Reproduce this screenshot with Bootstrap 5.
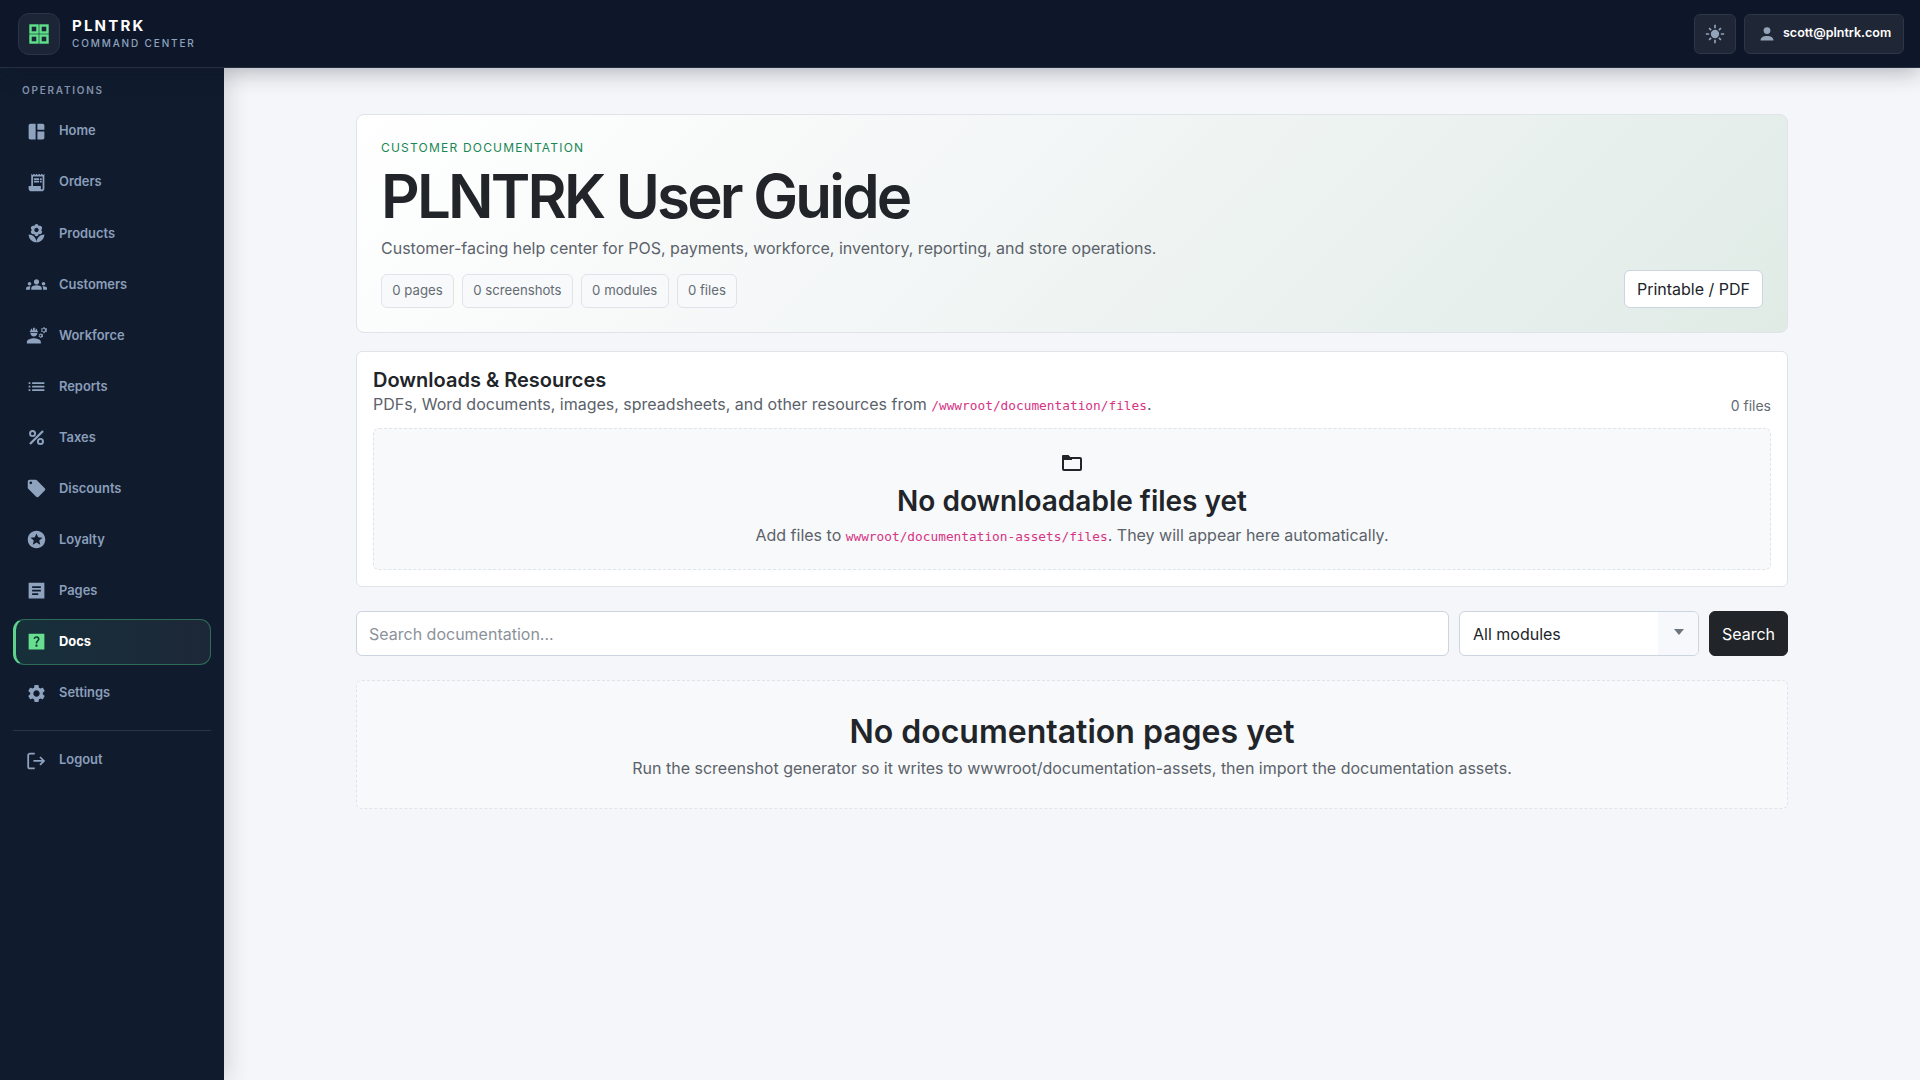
<!DOCTYPE html>
<html lang="en">

<head>
    <meta charset="UTF-8">
    <meta name="viewport" content="width=device-width, initial-scale=1.0">
    <title>PLNTRK User Guide</title>
    <link href="https://cdn.jsdelivr.net/npm/bootstrap@5.3.3/dist/css/bootstrap.min.css" rel="stylesheet">
    <style>
        html, body { height: 100%; }
        body { font-family: Inter, "Liberation Sans", sans-serif; background: #f5f6f9; color: #212529; overflow: hidden; }
        .app-top { height: 68px; background: #0d1729; border-bottom: 1px solid #27303f; padding: 0 16px 0 18px; position: relative; z-index: 3; box-shadow: 0 4px 22px rgba(15, 23, 42, .3); }
        .brand-tile { width: 42px; height: 42px; border-radius: 11px; background: #1c2536; border: 1px solid #2b3446; }
        .brand-tile svg { width: 24px; height: 24px; }
        .brand-name { font-size: 15px; font-weight: 700; letter-spacing: 2.2px; color: #fff; line-height: 16px; margin-bottom: 3px; }
        .brand-sub { font-size: 10px; font-weight: 500; letter-spacing: 1.85px; color: #8fa3bf; line-height: 12px; }
        .brand-gap { gap: 12px; }
        .top-btn { height: 40px; background: #1f2636; border: 1px solid #2d3546; border-radius: 6px; color: #fff; }
        .top-btn svg { fill: #94a3b8; }
        .theme-btn { width: 42px; }
        .user-btn { width: 160px; font-size: 12.5px; font-weight: 600; padding-left: 14px; gap: 8px; }
        .app-shell { height: calc(100vh - 68px); }
        .side-nav { width: 224px; background: #101b2d; padding: 16px 13px 0; position: relative; z-index: 2; box-shadow: 3px 0 22px rgba(15, 23, 42, .16); }
        .side-label { font-size: 10px; font-weight: 600; letter-spacing: 1.76px; color: #8293ab; margin: 0 0 12px 9px; line-height: 12px; }
        .side-link { height: 46px; margin-bottom: 5.1px; padding-left: 11.5px; gap: 12.5px; color: #8a9eba; font-size: 12.9px; font-weight: 600; text-decoration: none; border: 1px solid transparent; border-radius: 11px; }
        .side-link svg { width: 21px; height: 21px; fill: #8fa3bf; flex: none; }
        .side-link svg.stroke-icon { fill: none; stroke: #8fa3bf; stroke-width: 2; }
        .side-link.is-active { color: #fff; font-weight: 700; border-color: #2d6a58; border-left: 3px solid #5fd38d; padding-left: 9.5px; background: linear-gradient(90deg, #16303a, #1d2738); }
        .side-link.is-active svg { fill: #66e08f; }
        .side-rule { border-top: 1px solid #2a3343; margin: 14px 0 6px; }
        .main-pane { overflow: hidden; }
        .main-wrap { width: 1432px; margin: 46px auto 0; }
        .hero-box { height: 219px; border: 1px solid #dfe3ea; border-radius: 8px; padding: 24px; background: linear-gradient(135deg, #fff 0%, #f4f7f7 40%, #e0ebe6 100%); margin-bottom: 18px; }
        .hero-kicker { font-size: 12px; letter-spacing: 1.2px; color: #198754; line-height: 18px; margin: 1px 0 3px; }
        .hero-title { font-size: 60px; font-weight: 600; letter-spacing: -2.8px; line-height: 72px; margin: 0 0 4px; }
        .hero-lead { font-size: 16px; color: #5b626a; line-height: 24px; margin-bottom: 14px; }
        .stat-chip { height: 34px; padding: 0 10.3px; border: 1px solid #dfe3ea; border-radius: 6px; background: #f8f9fa; color: #646b73; font-size: 13.2px; }
        .pdf-btn { height: 38px; padding: 0 12px; font-size: 16px; background: #fff; border: 1px solid #ccd4e0; color: #212529; }
        .files-box { height: 236px; border: 1px solid #dfe3ea; border-radius: 6px; background: #fff; padding: 16px; margin-bottom: 24px; }
        .files-title { font-size: 20px; font-weight: 600; line-height: 24px; margin: 0; }
        .files-sub { font-size: 16px; color: #5b626a; line-height: 24px; height: 24px; }
        .files-sub code, .empty-sub code { font-family: "DejaVu Sans Mono", monospace; font-size: 12.8px; line-height: 1; color: #d63384; }
        .files-count { font-size: 14px; line-height: 21px; color: #646b73; }
        .empty-box { border: 1px dashed #dfe3ea; border-radius: 6px; background: #f8f9fa; text-align: center; }
        .empty-files { height: 142px; margin-top: 12px; padding-top: 26px; }
        .empty-files svg { display: block; margin: 0 auto 13px; }
        .empty-title { font-size: 28px; font-weight: 600; line-height: 34px; margin: 0 0 5px; }
        .empty-sub { font-size: 16px; color: #5b626a; line-height: 24px; }
        .search-row { gap: 10px; margin-bottom: 24px; }
        .search-input { height: 45px; font-size: 16px; border-color: #ccd4e0; }
        .search-input::placeholder { color: #8b9299; }
        .module-pick { width: 240px; height: 45px; flex: none; font-size: 16px; border: 1px solid #ccd4e0; border-radius: 6px; background: #fff; overflow: hidden; }
        .module-pick span { padding-left: 13px; color: #212529; }
        .module-caret { width: 40px; height: 100%; background: #f6f8fb; position: relative; }
        .module-caret::after { content: ""; position: absolute; left: 16px; top: 17px; border: 5px solid transparent; border-top: 6px solid #6c757d; }
        .search-btn { height: 45px; width: 79px; font-size: 16px; padding: 0; flex: none; }
        .empty-pages { height: 129px; padding-top: 32px; }
        .empty-pages .empty-title { font-size: 32px; line-height: 38px; margin-bottom: 5px; }
    </style>
</head>

<body>
    <header class="app-top d-flex align-items-center justify-content-between">
        <div class="d-flex align-items-center brand-gap">
            <div class="brand-tile d-flex align-items-center justify-content-center">
                <svg viewBox="0 0 24 24" fill="none" stroke="#5ee08a" stroke-width="2.4">
                    <rect x="3.5" y="3.5" width="7" height="7" /><rect x="13.5" y="3.5" width="7" height="7" />
                    <rect x="3.5" y="13.5" width="7" height="7" /><rect x="13.5" y="13.5" width="7" height="7" />
                </svg>
            </div>
            <div>
                <div class="brand-name">PLNTRK</div>
                <div class="brand-sub">COMMAND CENTER</div>
            </div>
        </div>
        <div class="d-flex gap-2">
            <button class="top-btn theme-btn d-flex align-items-center justify-content-center p-0" type="button" aria-label="Theme">
                <svg width="20" height="20" viewBox="0 0 24 24"><circle cx="12" cy="12" r="5" /><path d="M11 1h2v4h-2zM11 19h2v4h-2zM1 11h4v2H1zM19 11h4v2h-4zM4.2 5.6l1.4-1.4 2.5 2.5-1.4 1.4zM15.9 17.3l1.4-1.4 2.5 2.5-1.4 1.4zM4.2 18.4l2.5-2.5 1.4 1.4-2.5 2.5zM15.9 6.7l2.5-2.500 1.4 1.4-2.5 2.5z" /></svg>
            </button>
            <button class="top-btn user-btn d-flex align-items-center" type="button">
                <svg width="16" height="16" viewBox="0 0 16 16"><circle cx="8" cy="4.6" r="3.4" /><path d="M1.5 14.5c0-3.2 3-4.6 6.5-4.6s6.5 1.4 6.5 4.6z" /></svg>
                scott@plntrk.com
            </button>
        </div>
    </header>

    <div class="app-shell d-flex">
        <nav class="side-nav flex-shrink-0">
            <div class="side-label">OPERATIONS</div>
            <a class="side-link d-flex align-items-center" href="#"><svg viewBox="0 0 24 24"><path d="M11 21H5c-1.1 0-2-.9-2-2V5c0-1.1.9-2 2-2h6v18zm2 0h6c1.1 0 2-.9 2-2v-7h-8v9zm8-11V5c0-1.1-.9-2-2-2h-6v7h8z" /></svg>Home</a>
            <a class="side-link d-flex align-items-center" href="#"><svg viewBox="0 0 24 24"><path d="M19.5 3.5L18 2l-1.5 1.5L15 2l-1.5 1.5L12 2l-1.5 1.5L9 2 7.5 3.5 6 2v14H3v3c0 1.66 1.34 3 3 3h12c1.66 0 3-1.34 3-3V2l-1.5 1.5zM19 19c0 .55-.45 1-1 1s-1-.45-1-1v-3H8V5h11v14zM9 7h6v2H9zm7 0h2v2h-2zM9 10h6v2H9zm7 0h2v2h-2z" /></svg>Orders</a>
            <a class="side-link d-flex align-items-center" href="#"><svg viewBox="0 0 24 24"><path d="M12 22c4.97 0 9-4.03 9-9-4.97 0-9 4.03-9 9zM5.6 10.25c0 1.38 1.12 2.5 2.5 2.5.53 0 1.01-.16 1.42-.44l-.02.19c0 1.38 1.12 2.5 2.5 2.5s2.5-1.12 2.5-2.5l-.02-.19c.4.28.89.44 1.42.44 1.38 0 2.5-1.12 2.5-2.5 0-1-.59-1.85-1.43-2.25.84-.4 1.43-1.25 1.43-2.25 0-1.38-1.12-2.5-2.5-2.5-.53 0-1.01.16-1.42.44l.02-.19C14.5 2.12 13.38 1 12 1S9.5 2.12 9.5 3.5l.02.19c-.4-.28-.89-.44-1.42-.44-1.38 0-2.5 1.12-2.5 2.5 0 1 .59 1.85 1.43 2.25-.84.4-1.43 1.25-1.43 2.25zM12 5.5c1.38 0 2.5 1.12 2.5 2.5s-1.12 2.5-2.5 2.5S9.5 9.38 9.5 8s1.12-2.5 2.5-2.5zM3 13c0 4.97 4.03 9 9 9 0-4.97-4.03-9-9-9z" /></svg>Products</a>
            <a class="side-link d-flex align-items-center" href="#"><svg viewBox="0 0 24 24"><path d="M4 13c1.1 0 2-.9 2-2s-.9-2-2-2-2 .9-2 2 .9 2 2 2zm1.13 1.1c-.37-.06-.74-.1-1.13-.1-.99 0-1.93.21-2.78.58C.48 14.9 0 15.62 0 16.43V18h4.5v-1.61c0-.83.23-1.61.63-2.29zM20 13c1.1 0 2-.9 2-2s-.9-2-2-2-2 .9-2 2 .9 2 2 2zm4 3.43c0-.81-.48-1.53-1.22-1.85-.85-.37-1.79-.58-2.78-.58-.39 0-.76.04-1.13.1.4.68.63 1.46.63 2.29V18H24v-1.57zm-7.76-2.78c-1.17-.52-2.61-.9-4.24-.9-1.63 0-3.07.39-4.24.9C6.68 14.13 6 15.21 6 16.39V18h12v-1.61c0-1.18-.68-2.26-1.76-2.74zM12 12c1.66 0 3-1.34 3-3s-1.34-3-3-3-3 1.34-3 3 1.34 3 3 3z" /></svg>Customers</a>
            <a class="side-link d-flex align-items-center" href="#"><svg viewBox="0 0 24 24"><path d="M9 15c-2.67 0-8 1.34-8 4v2h16v-2c0-2.66-5.33-4-8-4zM5 9c0 2.21 1.79 4 4 4s4-1.79 4-4zM4.700 8.200h8.600c.3 0 .5-.2.5-.5s-.2-.5-.5-.5H13c0-1.500-.8-2.800-2-3.500V6h-1V3.200C9.700 3.100 9.300 3 9 3s-.7.1-1 .2V6H7V3.700C5.800 4.400 5 5.700 5 7.200h-.3c-.3 0-.5.2-.5.5s.2.500.5.500z" /><path fill-rule="evenodd" d="M20 2.300l1.200.2.300 1 1 .4.800-.4.800 1.100-.6.700v1l.6.800-.8 1-.9-.3-.900.500-.2 1h-1.300l-.3-1-.9-.5-.9.300-.7-1 .6-.8v-1l-.6-.7.800-1.100.8.400 1-.4zM20.200 4.400a1.500 1.500 0 1 0 .01 3 1.500 1.500 0 0 0-.01-3zM16.500 9.500l1 .2.200.7.700.3.700-.2.500.8-.5.600v.7l.5.600-.5.800-.7-.2-.7.300-.2.800h-1l-.2-.8-.7-.3-.7.200-.5-.8.500-.6v-.7l-.5-.6.500-.8.700.2.700-.3zM16.500 11.200a1 1 0 1 0 .01 2 1 1 0 0 0-.01-2z" /></svg>Workforce</a>
            <a class="side-link d-flex align-items-center" href="#"><svg viewBox="0 0 24 24"><path d="M3 13h2v-2H3v2zm0 4h2v-2H3v2zm0-8h2V7H3v2zm4 4h14v-2H7v2zm0 4h14v-2H7v2zM7 7v2h14V7H7z" /></svg>Reports</a>
            <a class="side-link d-flex align-items-center" href="#"><svg viewBox="0 0 24 24"><path d="M18.500 3.600l1.900 1.900L5.500 20.400l-1.900-1.900z" /><path fill-rule="evenodd" d="M7.500 3.500a4 4 0 1 1 0 8 4 4 0 0 1 0-8zm0 2.200a1.800 1.800 0 1 0 0 3.600 1.800 1.800 0 0 0 0-3.600zM16.500 12.500a4 4 0 1 1 0 8 4 4 0 0 1 0-8zm0 2.200a1.800 1.800 0 1 0 0 3.600 1.800 1.800 0 0 0 0-3.600z" /></svg>Taxes</a>
            <a class="side-link d-flex align-items-center" href="#"><svg viewBox="0 0 24 24"><path d="M21.410 11.580l-9-9C12.050 2.220 11.550 2 11 2H4c-1.100 0-2 .9-2 2v7c0 .55.22 1.050.59 1.420l9 9c.36.36.86.58 1.410.58.55 0 1.050-.22 1.410-.59l7-7c.37-.36.59-.86.59-1.410 0-.55-.23-1.060-.59-1.420zM5.500 7C4.670 7 4 6.330 4 5.500S4.670 4 5.500 4 7 4.670 7 5.500 6.330 7 5.500 7z" /></svg>Discounts</a>
            <a class="side-link d-flex align-items-center" href="#"><svg viewBox="0 0 24 24"><path d="M11.990 2C6.470 2 2 6.480 2 12s4.470 10 9.990 10C17.520 22 22 17.520 22 12S17.520 2 11.990 2zm4.240 16L12 15.450 7.770 18l1.120-4.810-3.730-3.230 4.920-.42L12 5l1.920 4.530 4.920.42-3.730 3.230L16.230 18z" /></svg>Loyalty</a>
            <a class="side-link d-flex align-items-center" href="#"><svg viewBox="0 0 24 24"><path d="M3 3h18v18H3zm11 14v-2H7v2zm3-4v-2H7v2zm0-4V7H7v2z" fill-rule="evenodd" /></svg>Pages</a>
            <a class="side-link is-active d-flex align-items-center" href="#"><svg viewBox="0 0 24 24"><path fill-rule="evenodd" d="M3 3h18v18H3zm9.010 15c.71 0 1.240-.57 1.250-1.260 0-.71-.54-1.250-1.250-1.250-.7 0-1.260.54-1.260 1.250 0 .7.56 1.260 1.260 1.260zm3.010-7.400c.67-1.010.41-2.360-.03-3.080C14.480 6.670 13.470 6 11.990 6c-1.770 0-2.980 1.150-3.440 2.520l1.650.7c.22-.68.74-1.480 1.800-1.480 1.620 0 1.940 1.520 1.370 2.330-.54.77-1.470 1.290-1.960 2.160-.39.69-.31 1.490-.31 1.980h1.820c0-.93.06-1.120.22-1.410.39-.71 1.110-1.060 1.870-2.170z" /></svg>Docs</a>
            <a class="side-link d-flex align-items-center" href="#"><svg viewBox="0 0 24 24"><path d="M19.140 12.940c.04-.3.06-.61.06-.94 0-.32-.02-.64-.07-.94l2.030-1.580c.18-.14.23-.41.12-.61l-1.920-3.320c-.12-.22-.37-.29-.59-.22l-2.390.96c-.5-.38-1.030-.7-1.620-.94l-.36-2.540c-.04-.24-.24-.41-.48-.41h-3.840c-.24 0-.43.17-.47.41l-.36 2.540c-.59.24-1.130.57-1.620.94l-2.390-.96c-.22-.08-.47 0-.59.22L2.740 8.870c-.12.21-.08.47.12.61l2.030 1.580c-.05.3-.09.63-.09.94s.02.64.07.94l-2.030 1.580c-.18.14-.23.41-.12.61l1.920 3.320c.12.22.37.29.59.22l2.390-.96c.5.38 1.030.7 1.620.94l.36 2.54c.05.24.24.41.48.41h3.840c.24 0 .44-.17.47-.41l.36-2.540c.59-.24 1.130-.56 1.620-.94l2.390.96c.22.08.47 0 .59-.22l1.920-3.320c.12-.22.07-.47-.12-.61l-2.010-1.580zM12 15.600c-1.980 0-3.600-1.620-3.600-3.600s1.620-3.600 3.600-3.600 3.600 1.620 3.600 3.600-1.620 3.600-3.600 3.600z" /></svg>Settings</a>
            <div class="side-rule"></div>
            <a class="side-link d-flex align-items-center" href="#"><svg class="stroke-icon" viewBox="0 0 24 24"><path d="M10 4H4.500a2 2 0 0 0-2 2v13a2 2 0 0 0 2 2H10M8.500 12.500h12.500M16 8l4.500 4.500L16 17" /></svg>Logout</a>
        </nav>

        <main class="main-pane flex-grow-1">
            <div class="main-wrap">
                <section class="hero-box d-flex justify-content-between align-items-end">
                    <div>
                        <div class="hero-kicker">CUSTOMER DOCUMENTATION</div>
                        <h1 class="hero-title">PLNTRK User Guide</h1>
                        <div class="hero-lead">Customer-facing help center for POS, payments, workforce, inventory, reporting, and store operations.</div>
                        <div class="d-flex gap-2">
                            <span class="stat-chip d-flex align-items-center">0 pages</span>
                            <span class="stat-chip d-flex align-items-center">0 screenshots</span>
                            <span class="stat-chip d-flex align-items-center">0 modules</span>
                            <span class="stat-chip d-flex align-items-center">0 files</span>
                        </div>
                    </div>
                    <a class="btn pdf-btn d-flex align-items-center" href="#">Printable / PDF</a>
                </section>

                <section class="files-box">
                    <div class="d-flex justify-content-between align-items-end">
                        <div>
                            <h2 class="files-title">Downloads &amp; Resources</h2>
                            <div class="files-sub">PDFs, Word documents, images, spreadsheets, and other resources from <code>/wwwroot/documentation/files</code>.</div>
                        </div>
                        <div class="files-count">0 files</div>
                    </div>
                    <div class="empty-box empty-files">
                        <svg width="20" height="16" viewBox="0 0 20 16"><path fill="#212529" d="M0 5V1.200C0 .5.500 0 1.200 0h5.300l2 2.200H10V5z" /><rect x="1" y="3" width="18" height="12" rx="1" fill="none" stroke="#212529" stroke-width="2" /></svg>
                        <h3 class="empty-title">No downloadable files yet</h3>
                        <div class="empty-sub">Add files to <code>wwwroot/documentation-assets/files</code>. They will appear here automatically.</div>
                    </div>
                </section>

                <form class="search-row d-flex">
                    <input class="form-control search-input" type="text" placeholder="Search documentation...">
                    <div class="module-pick d-flex align-items-center justify-content-between">
                        <span>All modules</span>
                        <div class="module-caret"></div>
                    </div>
                    <button class="btn btn-dark search-btn" type="button">Search</button>
                </form>

                <section class="empty-box empty-pages">
                    <h3 class="empty-title">No documentation pages yet</h3>
                    <div class="empty-sub">Run the screenshot generator so it writes to wwwroot/documentation-assets, then import the documentation assets.</div>
                </section>
            </div>
        </main>
    </div>

    <script src="https://cdn.jsdelivr.net/npm/bootstrap@5.3.3/dist/js/bootstrap.bundle.min.js"></script>
</body>

</html>
